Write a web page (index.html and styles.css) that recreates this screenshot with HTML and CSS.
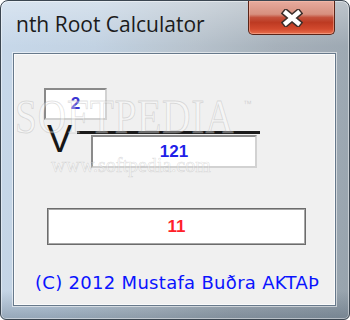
FILE: index.html
```html
<!DOCTYPE html>
<html>
<head>
<meta charset="utf-8">
<link rel="stylesheet" href="styles.css">
</head>
<body>
<div class="window">
  <div class="titlebar">
    <span class="title">nth Root Calculator</span>
    <div class="close">
      <svg width="22" height="18" viewBox="0 0 22 18">
        <path d="M5 4 L17 14 M17 4 L5 14" stroke="#3d2f2b" stroke-width="7.5" stroke-linecap="square" fill="none"/>
        <path d="M5 4 L17 14 M17 4 L5 14" stroke="#ffffff" stroke-width="4.5" stroke-linecap="square" fill="none"/>
      </svg>
    </div>
  </div>
  <div class="client">
    <div class="index-box">2</div>
    <div class="radical">
      <span class="v">V</span>
      <div class="radicand">
        <div class="vinculum"></div>
        <div class="num-box">121</div>
      </div>
    </div>
    <div class="result">11</div>
    <div class="copy">(C) 2012 Mustafa Buðra AKTAÞ</div>
  </div>
  <div class="watermark">
    <span class="wm-logo">SOFTPEDIA</span><span class="wm-tm">™</span>
    <span class="wm-url">www.softpedia.com</span>
  </div>
</div>
</body>
</html>
```
FILE: styles.css
```css
html, body {
  margin: 0;
  padding: 0;
  width: 350px;
  height: 320px;
  overflow: hidden;
  background: #ffffff;
}
.window {
  position: relative;
  width: 350px;
  height: 320px;
  box-sizing: border-box;
  border: 1px solid #3b4651;
  border-radius: 8px 8px 6px 6px;
  display: flex;
  flex-direction: column;
  overflow: hidden;
  background:
    linear-gradient(to bottom, rgba(255,255,255,0) 0, rgba(255,255,255,0) 290px, rgba(40,60,80,0.3) 318px),
    linear-gradient(to bottom, rgba(255,255,255,0.35) 0, rgba(255,255,255,0.05) 45px),
    linear-gradient(100deg, #c4d6e9 0%, #bfd0e1 25%, #b3bfca 50%, #a2adb7 70%, #929ea9 100%);
  box-shadow: inset 0 0 0 1px rgba(255,255,255,0.45);
}
.titlebar {
  height: 52px;
  display: flex;
  justify-content: space-between;
  align-items: flex-start;
}
.title {
  margin-left: 15px;
  margin-top: 11px;
  font-family: "Open Sans", "Noto Sans", sans-serif;
  font-size: 21px;
  line-height: 25px;
  color: #1b1b1b;
}
.close {
  width: 87px;
  height: 34px;
  box-sizing: border-box;
  margin-right: 14px;
  border: 1px solid #5a2418;
  border-top: none;
  border-radius: 0 0 5px 5px;
  background: linear-gradient(to bottom, #e7ab9e 0%, #d7907f 40%, #c4513c 50%, #bd3a22 65%, #d24a2e 85%, #e8704e 100%);
  box-shadow: inset 0 0 0 1px rgba(255,200,180,0.45);
  display: flex;
  align-items: center;
  justify-content: center;
}
.close svg {
  display: block;
  margin-top: 1px;
}
.client {
  flex: 1;
  margin: 0 13px 13px 12px;
  border: 1px solid #67798b;
  background: #f0f0f0;
  box-shadow: 0 0 0 1px rgba(255,255,255,0.55), inset 0 0 0 1px #fbfbfb;
  padding-top: 34px;
  display: flex;
  flex-direction: column;
  align-items: flex-start;
}
.index-box, .num-box {
  box-sizing: border-box;
  background: #ffffff;
  border-style: solid;
  border-width: 2px;
  border-color: #8a8a8a #d2d2d2 #d2d2d2 #8a8a8a;
  display: flex;
  align-items: center;
  justify-content: center;
  font-family: "Liberation Sans", Arial, sans-serif;
  font-weight: bold;
  font-size: 17px;
}
.index-box {
  margin-left: 30px;
  width: 63px;
  height: 32px;
  color: #3a34d2;
}
.radical {
  display: flex;
  margin-left: 30px;
}
.v {
  width: 30px;
  padding-left: 3px;
  font-family: "Liberation Sans", Arial, sans-serif;
  font-size: 38px;
  line-height: 38px;
  color: #161616;
}
.radicand {
  margin-top: 11px;
  display: flex;
  flex-direction: column;
}
.vinculum {
  width: 183px;
  height: 3px;
  background: #1a1a1a;
}
.num-box {
  margin-top: 1px;
  margin-left: 14px;
  width: 166px;
  height: 33px;
  color: #1f1fe8;
}
.result {
  margin-top: 40px;
  margin-left: 33px;
  width: 259px;
  height: 37px;
  box-sizing: border-box;
  background: #ffffff;
  border: 1px solid #6c6c6c;
  box-shadow: inset 0 0 0 1px #a6a6a6;
  display: flex;
  align-items: center;
  justify-content: center;
  font-family: "Liberation Sans", Arial, sans-serif;
  font-weight: bold;
  font-size: 17px;
  color: #ff1f2a;
}
.copy {
  margin-top: 27px;
  margin-left: 21px;
  font-family: "DejaVu Sans", sans-serif;
  font-size: 18px;
  line-height: 22px;
  letter-spacing: 0.3px;
  color: #0a14ff;
  white-space: nowrap;
}
.watermark {
  position: absolute;
  left: 14px;
  top: 92px;
  width: 260px;
  height: 90px;
  pointer-events: none;
}
.wm-logo {
  position: absolute;
  left: 0;
  top: 0;
  font-family: "Liberation Serif", serif;
  font-size: 48px;
  line-height: 48px;
  letter-spacing: 1px;
  color: rgba(255,255,255,0.35);
  -webkit-text-stroke: 1px rgba(150,150,150,0.28);
  transform: scaleX(0.82);
  transform-origin: left top;
  white-space: nowrap;
}
.wm-tm {
  position: absolute;
  left: 228px;
  top: 6px;
  font-family: "Liberation Sans", sans-serif;
  font-size: 9px;
  color: rgba(150,150,150,0.35);
}
.wm-url {
  position: absolute;
  left: 36px;
  top: 62px;
  font-family: "Liberation Serif", serif;
  font-size: 20px;
  line-height: 20px;
  color: rgba(255,255,255,0.4);
  -webkit-text-stroke: 0.6px rgba(150,150,150,0.3);
  white-space: nowrap;
}
```
